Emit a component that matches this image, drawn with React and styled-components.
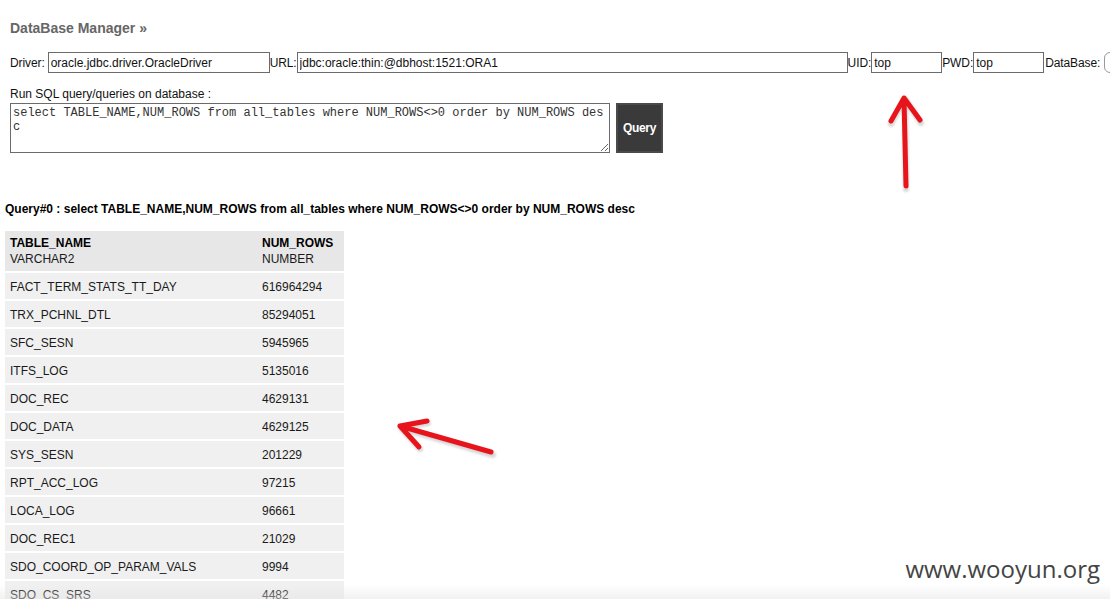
import styled, { createGlobalStyle } from "styled-components";

const GlobalStyle = createGlobalStyle`
  html, body {
    margin: 0;
    padding: 0;
    background: #fff;
    overflow: hidden;
  }
  body {
    font-family: "Liberation Sans", Arial, sans-serif;
    font-size: 12px;
    color: #111;
  }
`;

const Page = styled.div`
  position: relative;
  width: 1110px;
  height: 599px;
  overflow: hidden;
  padding: 0 0 0 5px;
  box-sizing: border-box;
`;

const Title = styled.h2`
  margin: 0;
  padding: 20px 0 0 5px;
  font-size: 14px;
  line-height: 17px;
  font-weight: bold;
  color: #666;
`;

const ConnRow = styled.div`
  display: flex;
  align-items: center;
  white-space: nowrap;
  margin-top: 15px;
  padding-left: 5px;
  height: 21px;
`;

const Label = styled.span`
  font-size: 12px;
  color: #111;
  margin-left: ${(p) => p.$before || 0}px;
  margin-right: ${(p) => p.$space || 0}px;
  letter-spacing: -0.1px;
`;

const TextInput = styled.input`
  box-sizing: border-box;
  width: ${(p) => p.$w}px;
  height: 21px;
  flex: none;
  margin: 0;
  padding: 0 2px;
  border: 1px solid #6b6b6b;
  font-family: "Liberation Sans", Arial, sans-serif;
  font-size: 12px;
  color: #111;
  background: #fff;
  outline: none;
`;

const DbSelect = styled.div`
  flex: none;
  width: 80px;
  height: 21px;
  margin-left: 4px;
  box-sizing: border-box;
  border: 1px solid #999;
  border-radius: 6px;
`;

const SqlLabel = styled.div`
  margin-top: 14px;
  padding-left: 5px;
  line-height: 14px;
  color: #111;
`;

const SqlRow = styled.div`
  display: flex;
  gap: 6px;
  margin-top: 2px;
  padding-left: 5px;
`;

const SqlArea = styled.textarea`
  box-sizing: border-box;
  width: 600px;
  height: 50px;
  margin: 0;
  padding: 2px;
  border: 1px solid #6b6b6b;
  font-family: "Liberation Mono", "Courier New", monospace;
  font-size: 12px;
  line-height: 14px;
  color: #333;
  resize: both;
  word-break: break-all;
  overflow: hidden;
  outline: none;
`;

const QueryButton = styled.button`
  box-sizing: border-box;
  width: 47px;
  height: 50px;
  margin: 0;
  padding: 0;
  border: 2px solid #4a4a4a;
  background: #3a3a3a;
  color: #fff;
  font-family: "Liberation Sans", Arial, sans-serif;
  font-size: 12px;
  font-weight: bold;
  letter-spacing: -0.3px;
  cursor: pointer;
`;

const QueryTitle = styled.div`
  margin-top: 49px;
  font-weight: bold;
  font-size: 12px;
  line-height: 14px;
  color: #000;
`;

const Table = styled.div`
  margin-top: 15px;
  width: 339px;
  display: flex;
  flex-direction: column;
  gap: 2px;
  background: #fff;
`;

const Row = styled.div`
  display: grid;
  grid-template-columns: 252px 87px;
  align-items: center;
  box-sizing: border-box;
  height: ${(p) => (p.$head ? 40 : 26)}px;
  padding-top: ${(p) => (p.$head ? 0 : 2)}px;
  background: ${(p) => (p.$head ? "#e7e7e7" : "#f0f0f0")};
`;

const Cell = styled.div`
  padding-left: 5px;
  line-height: 16px;
  color: #1a1a1a;
  white-space: nowrap;
`;

const HeadName = styled.div`
  font-weight: bold;
  color: #000;
`;

const Arrow = styled.svg`
  position: absolute;
  left: 0;
  top: 0;
  pointer-events: none;
`;

const Shade = styled.div`
  position: absolute;
  left: 0;
  right: 0;
  bottom: 0;
  height: 14px;
  background: linear-gradient(to bottom, rgba(235, 235, 235, 0), rgba(228, 228, 228, 0.5));
  pointer-events: none;
`;

const Watermark = styled.div`
  position: absolute;
  right: 10px;
  bottom: 14px;
  font-family: "Open Sans", "DejaVu Sans", sans-serif;
  font-size: 24px;
  color: #444;
`;

const rows = [
  ["FACT_TERM_STATS_TT_DAY", "616964294"],
  ["TRX_PCHNL_DTL", "85294051"],
  ["SFC_SESN", "5945965"],
  ["ITFS_LOG", "5135016"],
  ["DOC_REC", "4629131"],
  ["DOC_DATA", "4629125"],
  ["SYS_SESN", "201229"],
  ["RPT_ACC_LOG", "97215"],
  ["LOCA_LOG", "96661"],
  ["DOC_REC1", "21029"],
  ["SDO_COORD_OP_PARAM_VALS", "9994"],
  ["SDO_CS_SRS", "4482"],
];

const sql =
  "select TABLE_NAME,NUM_ROWS from all_tables where NUM_ROWS<>0 order by NUM_ROWS desc";

export default function App() {
  return (
    <>
      <GlobalStyle />
      <Page>
        <Title>DataBase Manager »</Title>
        <ConnRow>
          <Label $space={3}>Driver:</Label>
          <TextInput $w={222} defaultValue="oracle.jdbc.driver.OracleDriver" />
          <Label>URL:</Label>
          <TextInput $w={551} defaultValue="jdbc:oracle:thin:@dbhost:1521:ORA1" />
          <Label>UID:</Label>
          <TextInput $w={71} defaultValue="top" />
          <Label>PWD:</Label>
          <TextInput $w={71} defaultValue="top" />
          <Label $before={1}>DataBase:</Label>
          <DbSelect />
        </ConnRow>
        <SqlLabel>Run SQL query/queries on database :</SqlLabel>
        <SqlRow>
          <SqlArea defaultValue={sql} spellCheck={false} />
          <QueryButton>Query</QueryButton>
        </SqlRow>
        <QueryTitle>Query#0 : {sql}</QueryTitle>
        <Table>
          <Row $head>
            <Cell>
              <HeadName>TABLE_NAME</HeadName>
              VARCHAR2
            </Cell>
            <Cell>
              <HeadName>NUM_ROWS</HeadName>
              NUMBER
            </Cell>
          </Row>
          {rows.map(([name, num]) => (
            <Row key={name}>
              <Cell>{name}</Cell>
              <Cell>{num}</Cell>
            </Row>
          ))}
        </Table>

        <Arrow width="1110" height="599" viewBox="0 0 1110 599">
          <defs>
            <filter id="sh" x="-20%" y="-20%" width="140%" height="140%">
              <feGaussianBlur stdDeviation="1.2" />
            </filter>
          </defs>
          <g stroke="#b0b0b0" strokeWidth="6" strokeLinecap="round" strokeLinejoin="round" fill="none" opacity="0.5" filter="url(#sh)">
            <path d="M906 189 L905 100 M891 124 L905 99 L921 123" />
            <path d="M493 455 L401 428 M428 423 L401 428 L420 449" />
          </g>
          <g stroke="#e8141c" strokeWidth="5" strokeLinecap="round" strokeLinejoin="round" fill="none">
            <path d="M906 186 L904 99 M891 121 L904 98 L920 120" />
            <path d="M491 452 L400 426 M427 421 L400 426 L419 447" />
          </g>
        </Arrow>

        <Shade />
        <Watermark>www.wooyun.org</Watermark>
      </Page>
    </>
  );
}
